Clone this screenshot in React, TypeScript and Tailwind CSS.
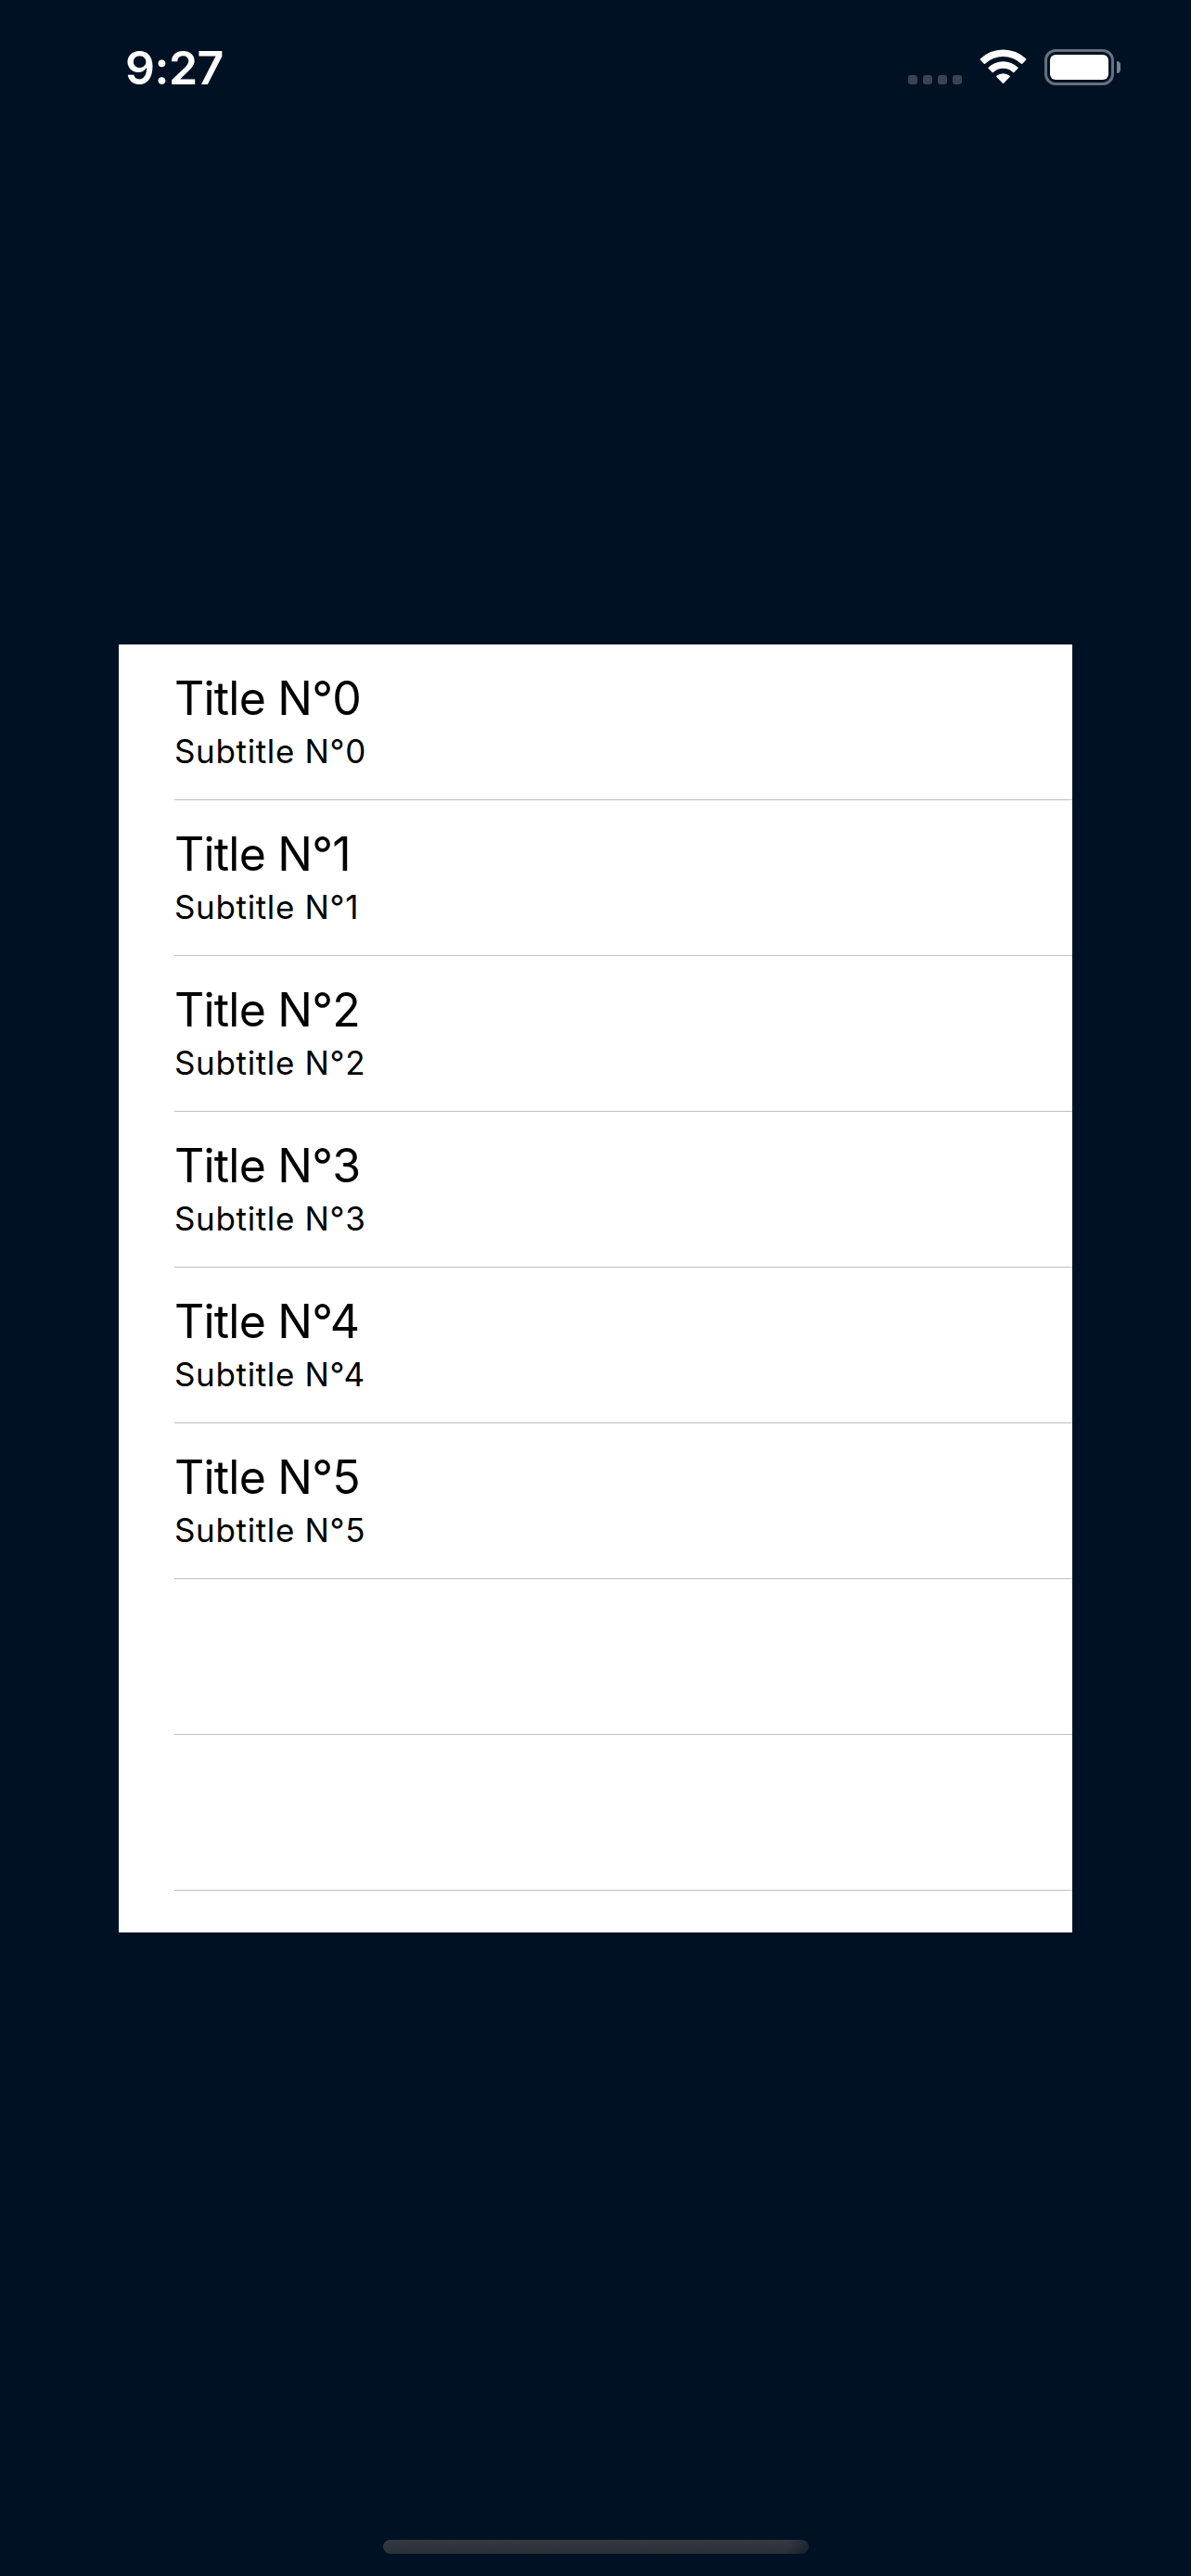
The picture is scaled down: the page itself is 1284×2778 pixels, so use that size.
const items = [0, 1, 2, 3, 4, 5];

function CellularDots() {
  return (
    <div className="mt-[28px] flex gap-[6px]">
      {[0, 1, 2, 3].map((n) => (
        <span key={n} className="size-[10px] rounded-[3px] bg-[#3b4453]" />
      ))}
    </div>
  );
}

function WifiIcon() {
  return (
    <svg className="ml-[18px] h-[40px] w-[53px]" viewBox="0 0 53 40" fill="#fff">
      <path d="M1.7 10.6A35.5 35.5 0 0 1 51.3 10.6Q51.8 11.1 51.3 11.6L47.2 15.8Q46.6 16.4 46 15.8A28.5 28.5 0 0 0 7 15.8Q6.4 16.4 5.8 15.8L1.7 11.6Q1.2 11.1 1.7 10.6Z" />
      <path d="M10.5 19.7A23 23 0 0 1 42.5 19.7Q43 20.2 42.5 20.7L38.3 24.9Q37.7 25.5 37.1 24.9A15.9 15.9 0 0 0 15.9 24.9Q15.3 25.5 14.7 24.9L10.5 20.7Q10 20.2 10.5 19.7Z" />
      <path d="M19.4 28.8A11 11 0 0 1 33.6 28.8Q34.2 29.4 33.6 30L27.1 36.7Q26.5 37.3 25.9 36.7L19.4 30Q18.8 29.4 19.4 28.8Z" />
    </svg>
  );
}

function BatteryIcon() {
  return (
    <div className="ml-[18px] flex items-center gap-[3px]">
      <div className="h-[39px] w-[75px] rounded-[12px] border-[3px] border-[#667080] p-[3px]">
        <div className="h-full w-full rounded-[6px] bg-white" />
      </div>
      <div className="h-[13px] w-[4px] rounded-r-full bg-[#78818e]" />
    </div>
  );
}

export default function App() {
  return (
    <div className="flex h-[2778px] w-[1284px] flex-col items-center overflow-hidden bg-[#001123] font-['Inter',sans-serif]">
      <header className="flex h-[695px] w-full shrink-0 items-start justify-between pt-[53px] pr-[76px] pl-[135px]">
        <span className="-mt-[11px] text-[50px] leading-[62px] font-semibold tracking-[-0.5px] text-white">9:27</span>
        <div className="flex items-start">
          <CellularDots />
          <WifiIcon />
          <BatteryIcon />
        </div>
      </header>
      <ul className="h-[1389px] w-[1028px] shrink-0 bg-white pl-[60px] text-black">
        {items.map((n) => (
          <li key={n} className="h-[168px] border-b border-[#bfbfc1] pt-[27px]">
            <p className="text-[50px] leading-[62px] tracking-[-0.8px]">Title N°{n}</p>
            <p className="mt-1 text-[35px] leading-[44px] tracking-[0.65px]">Subtitle N°{n}</p>
          </li>
        ))}
        <li className="h-[168px] border-b border-[#bfbfc1]" />
        <li className="h-[168px] border-b border-[#bfbfc1]" />
      </ul>
      <footer className="mt-auto mb-[24px] flex pl-[1px]">
        <div className="h-[15px] w-[459px] rounded-full bg-[linear-gradient(120deg,transparent_94%,#00112388_100%),linear-gradient(#353942,#2a3138)]" />
      </footer>
    </div>
  );
}
